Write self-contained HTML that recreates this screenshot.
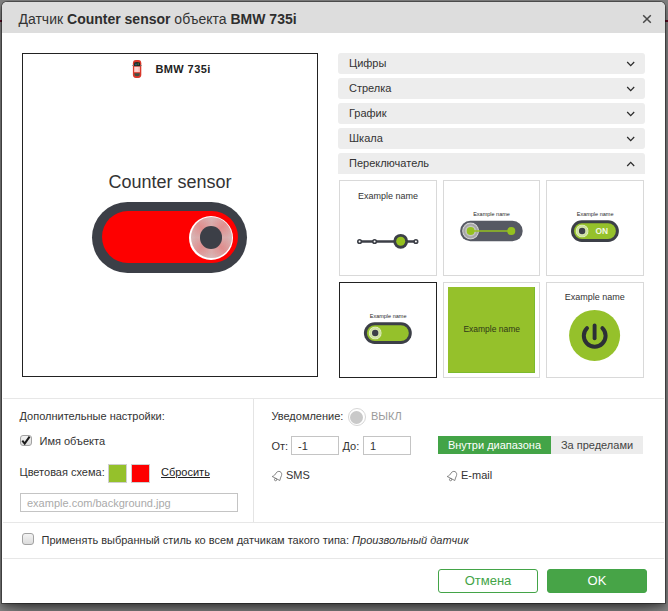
<!DOCTYPE html>
<html lang="ru">
<head>
<meta charset="utf-8">
<title>Датчик Counter sensor</title>
<style>
*{box-sizing:border-box;margin:0;padding:0}
html,body{width:668px;height:611px;overflow:hidden}
body{background:#828282;font-family:"Liberation Sans",Arial,sans-serif;font-size:12px;color:#333;position:relative}
.abs{position:absolute}
#dlg{position:absolute;left:2px;top:2px;width:663px;height:601px;background:#fff;border-radius:5px 5px 0 0;box-shadow:0 0 0 1px rgba(0,0,0,.35),0 3px 9px rgba(0,0,0,.5),0 16px 16px -10px rgba(0,0,0,.3)}
#hdr{position:absolute;left:0;top:0;width:663px;height:31px;background:#dddddd;border-radius:5px 5px 0 0}
#ttl{position:absolute;left:16.5px;top:8px;font-size:14px;line-height:18px;color:#333;white-space:nowrap}
#ttl b{color:#2e2e2e}
.mark{position:absolute;background:#5c0a22;height:2px;top:20px}
/* coordinates below are page coords; container offset by -2 */
#pg{position:absolute;left:-2px;top:-2px;width:668px;height:611px}
#prev{left:22px;top:53px;width:296px;height:324px;border:1px solid #222;background:#fff}
.acc{left:338px;width:307px;height:21px;background:#ededed;border-radius:3px;line-height:21px;padding-left:11px;color:#333;font-size:11px}
.acc svg{position:absolute;right:10px;top:8px}
.th{width:98px;height:96px;border:1px solid #d9d9d9;background:#fff}
.th.sel{border-color:#222}
.hr{background:#e7e7e7;height:1px;left:3px;width:661px}
.t{white-space:nowrap;line-height:14px;font-size:11px;color:#333}
.inp{border:1px solid #c4c4c4;background:#fff;height:19px;font-size:11px;line-height:19px;padding-left:6px;color:#333}
.cb{width:13px;height:13px;border:1px solid #a2a2a2;border-radius:3px;background:linear-gradient(#f3f3f3,#dcdcdc)}
.btn{height:24px;width:100px;border-radius:3px;text-align:center;font-size:13px;line-height:22px}
</style>
</head>
<body>
<div class="mark" style="left:0;width:2px"></div>
<div class="mark" style="left:665px;width:3px"></div>
<div id="dlg">
<div id="hdr"></div>
<div id="ttl">Датчик <b>Counter sensor</b> объекта <b>BMW 735i</b></div>
<div id="pg">
<svg class="abs" style="left:641.5px;top:13.6px" width="10" height="10" viewBox="0 0 10 10"><path d="M1.2 1.2 L8.8 8.8 M8.8 1.2 L1.2 8.8" stroke="#484848" stroke-width="1.5" fill="none"/></svg>

<div id="prev" class="abs"></div>
<!-- car -->
<svg class="abs" style="left:132px;top:59px" width="10" height="20" viewBox="0 0 10 20">
<rect x="0.9" y="0.9" width="8.4" height="18" rx="3" ry="3.4" fill="#d9382a"/>
<rect x="0" y="6" width="10" height=".9" fill="#8a8a8a" opacity=".8"/>
<path d="M1.9 7.2 L2.3 3.6 Q5 2.6 7.9 3.6 L8.3 7.2 Z" fill="#1d2a22"/>
<rect x="3.4" y="4.6" width="1.2" height="1.6" fill="#3a6fae"/><rect x="5.6" y="4.3" width="1.2" height="1.5" fill="#4f8a46"/>
<rect x="2.1" y="7.6" width="5.8" height="5.6" fill="#fbc3bd"/>
<rect x="3" y="8" width="3" height="4.6" fill="#ffd9d5" opacity=".7"/>
<path d="M2.4 14.2 L7.8 14.2 L7.4 16.8 Q5 17.6 2.8 16.8 Z" fill="#3f5146"/>
</svg>
<div class="abs t" style="left:155.4px;top:62px;font-weight:bold;font-size:11px;letter-spacing:.42px;color:#222">BMW 735i</div>
<div class="abs" style="left:22px;top:171px;transform:translateY(-.5px);width:296px;text-align:center;font-size:18px;line-height:22px;color:#333">Counter sensor</div>
<!-- big switch -->
<div class="abs" style="left:92.4px;top:202px;width:154.4px;height:70.6px;border-radius:36px;background:#3c3f47"></div>
<div class="abs" style="left:102px;top:211.4px;width:136px;height:52.1px;border-radius:26px;background:#fe0000"></div>
<div class="abs" style="left:189px;top:215.5px;width:44px;height:44px;border-radius:50%;background:#fff"></div>
<div class="abs" style="left:190.5px;top:217px;width:41px;height:41px;border-radius:50%;background:radial-gradient(circle,rgba(225,120,120,.4) 52%,rgba(214,196,196,.0) 100%),repeating-conic-gradient(from 0deg,#d4cece 0deg,#d8b6b6 22deg,#de9c9c 45deg,#d8b6b6 68deg,#d4cece 90deg)"></div>
<div class="abs" style="left:199.8px;top:226.3px;width:22.4px;height:22.4px;border-radius:50%;background:#3c3f47"></div>

<!-- accordion -->
<div class="abs acc" style="top:53px">Цифры<svg width="9" height="6" viewBox="0 0 9 6"><path d="M1.2 1 L4.7 4.6 L8.2 1" stroke="#2a2a2a" stroke-width="1.25" fill="none"/></svg></div>
<div class="abs acc" style="top:78px">Стрелка<svg width="9" height="6" viewBox="0 0 9 6"><path d="M1.2 1 L4.7 4.6 L8.2 1" stroke="#2a2a2a" stroke-width="1.25" fill="none"/></svg></div>
<div class="abs acc" style="top:103px">График<svg width="9" height="6" viewBox="0 0 9 6"><path d="M1.2 1 L4.7 4.6 L8.2 1" stroke="#2a2a2a" stroke-width="1.25" fill="none"/></svg></div>
<div class="abs acc" style="top:128px">Шкала<svg width="9" height="6" viewBox="0 0 9 6"><path d="M1.2 1 L4.7 4.6 L8.2 1" stroke="#2a2a2a" stroke-width="1.25" fill="none"/></svg></div>
<div class="abs acc" style="top:153px;border-radius:3px 3px 0 0">Переключатель<svg width="9" height="6" viewBox="0 0 9 6"><path d="M1.2 5 L4.7 1.4 L8.2 5" stroke="#2a2a2a" stroke-width="1.25" fill="none"/></svg></div>

<!-- thumbs -->
<div class="abs th" style="left:339px;top:180px"></div>
<div class="abs th" style="left:443px;top:180px;width:97px"></div>
<div class="abs th" style="left:546px;top:180px"></div>
<div class="abs th sel" style="left:339px;top:282px"></div>
<div class="abs th" style="left:443px;top:282px;width:97px"></div>
<div class="abs th" style="left:546px;top:282px"></div>

<svg class="abs" style="left:339px;top:180px" width="306" height="198" viewBox="339 180 306 198" font-family="Liberation Sans, Arial, sans-serif">
<defs>
<radialGradient id="kg" cx="50%" cy="50%" r="50%"><stop offset="0" stop-color="#dadada"/><stop offset=".5" stop-color="#cdcdcd"/><stop offset=".74" stop-color="#a2a2a2"/><stop offset=".86" stop-color="#b4b4b4"/><stop offset=".95" stop-color="#e0e0e0"/><stop offset="1" stop-color="#b9babd"/></radialGradient>
<radialGradient id="kw" cx="50%" cy="50%" r="50%"><stop offset="0" stop-color="#fff" stop-opacity=".7"/><stop offset=".5" stop-color="#fff" stop-opacity=".68"/><stop offset=".78" stop-color="#fff" stop-opacity=".5"/><stop offset=".9" stop-color="#fff" stop-opacity=".72"/><stop offset="1" stop-color="#fff" stop-opacity=".3"/></radialGradient>
</defs>
<!-- thumb 1 -->
<text x="388" y="198.6" font-size="9" text-anchor="middle" fill="#333">Example name</text>
<line x1="359.6" y1="241.5" x2="415.9" y2="241.5" stroke="#3c3f47" stroke-width="2.6"/>
<circle cx="359.6" cy="241.5" r="1.8" fill="#fff" stroke="#3c3f47" stroke-width="1.6"/>
<circle cx="374.6" cy="241.5" r="1.8" fill="#fff" stroke="#3c3f47" stroke-width="1.6"/>
<circle cx="415.9" cy="241.5" r="1.8" fill="#fff" stroke="#3c3f47" stroke-width="1.6"/>
<circle cx="400.7" cy="241.3" r="7.4" fill="#3c3f47"/>
<circle cx="400.7" cy="241.3" r="4.5" fill="#95c11f"/>
<!-- thumb 2 -->
<text x="491.5" y="215.8" font-size="5.5" text-anchor="middle" fill="#2a2a2a">Example name</text>
<rect x="460.1" y="220.8" width="62.6" height="20.4" rx="10.2" fill="#565963"/>
<circle cx="470.6" cy="231" r="8.4" fill="url(#kg)"/>
<line x1="470.6" y1="231" x2="511.3" y2="231" stroke="#95c11f" stroke-width="1.5"/>
<circle cx="470.6" cy="231" r="4" fill="#95c11f"/>
<circle cx="511.3" cy="231" r="4" fill="#95c11f"/>
<!-- thumb 3 -->
<text x="595.1" y="215.8" font-size="5.5" text-anchor="middle" fill="#2a2a2a">Example name</text>
<rect x="571" y="220.3" width="47.9" height="21.6" rx="10.8" fill="#3c3f47"/>
<rect x="574" y="223.2" width="41.9" height="15.8" rx="7.9" fill="#95c12b"/>
<circle cx="582.1" cy="231" r="6.6" fill="url(#kw)"/>
<circle cx="582.1" cy="231" r="3.2" fill="#3c3f47"/>
<text x="601.7" y="234" font-size="9.5" font-weight="bold" text-anchor="middle" fill="#f2f6e4" textLength="12.6" lengthAdjust="spacingAndGlyphs">ON</text>
<!-- thumb 4 -->
<text x="388.1" y="317.8" font-size="5.5" text-anchor="middle" fill="#2a2a2a">Example name</text>
<rect x="363.9" y="322.3" width="47.9" height="21.6" rx="10.8" fill="#3c3f47"/>
<rect x="366.9" y="325.2" width="41.9" height="15.8" rx="7.9" fill="#95c12b"/>
<circle cx="375.2" cy="333" r="6.6" fill="url(#kw)"/>
<circle cx="375.2" cy="333" r="3.2" fill="#3c3f47"/>
<!-- thumb 5 -->
<rect x="448" y="287" width="87" height="86" fill="#7cba2c"/><rect x="448" y="287" width="86" height="85" fill="#95c12b"/>
<text x="491.7" y="331.8" font-size="9.4" text-anchor="middle" fill="#2f3818" textLength="56.6" lengthAdjust="spacingAndGlyphs">Example name</text>
<!-- thumb 6 -->
<text x="594.8" y="299.7" font-size="9" text-anchor="middle" fill="#333">Example name</text>
<circle cx="594.6" cy="335.4" r="25.5" fill="#95c12b"/>
<path d="M587.0 328.1 A10.9 10.9 0 1 0 602.4 328.1" fill="none" stroke="#2c2f36" stroke-width="4" stroke-linecap="round"/>
<line x1="594.6" y1="325.4" x2="594.6" y2="338.2" stroke="#2c2f36" stroke-width="3.9" stroke-linecap="round"/>
</svg>
<!-- separators -->
<div class="abs hr" style="top:398px"></div>
<div class="abs" style="left:253px;top:399px;width:1px;height:123px;background:#e4e4e4"></div>
<div class="abs hr" style="top:522px"></div>
<div class="abs hr" style="top:558px"></div>

<!-- left settings -->
<div class="abs t" style="left:19.5px;top:409px">Дополнительные настройки:</div>
<div class="abs cb" style="left:20.2px;top:434.8px;width:11.6px;height:11.6px"></div>
<svg class="abs" style="left:20px;top:434px" width="12" height="13" viewBox="20 434 12 13"><path d="M22.3 440.6 L24.7 443.6 L29.6 436.6" stroke="#1a1a1a" stroke-width="2" fill="none"/></svg>
<div class="abs t" style="left:39.5px;top:434px">Имя объекта</div>
<div class="abs t" style="left:19.5px;top:465px">Цветовая схема:</div>
<div class="abs" style="left:108px;top:464px;width:19px;height:19px;background:#95c12b;border:1px solid #cfcfcf"></div>
<div class="abs" style="left:131px;top:464px;width:19px;height:19px;background:#fe0000;border:1px solid #cfcfcf"></div>
<div class="abs t" style="left:161px;top:465px;text-decoration:underline;color:#222">Сбросить</div>
<div class="abs inp" style="left:20px;top:493px;width:218px;color:#aaa">example.com/background.jpg</div>

<!-- right settings -->
<div class="abs t" style="left:271.4px;top:409px">Уведомление:</div>
<div class="abs" style="left:347.5px;top:408px;width:18px;height:18px;border-radius:50%;border:1px solid #d6d6d6;background:#fff"></div>
<div class="abs" style="left:350px;top:410.5px;width:13px;height:13px;border-radius:50%;background:#c9c9c9"></div>
<div class="abs t" style="left:371px;top:409px;color:#9a9a9a">ВЫКЛ</div>
<div class="abs t" style="left:271.4px;top:439px">От:</div>
<div class="abs inp" style="left:291px;top:436px;width:48px">-1</div>
<div class="abs t" style="left:342.5px;top:439px">До:</div>
<div class="abs inp" style="left:363px;top:436px;width:48px">1</div>
<div class="abs t" style="left:438px;top:436px;width:113px;height:18px;line-height:18px;background:#43a447;color:#fff;text-align:center">Внутри диапазона</div>
<div class="abs t" style="left:551px;top:436px;width:92px;height:18px;line-height:18px;background:#ececec;color:#444;text-align:center">За пределами</div>
<svg class="abs" style="left:270px;top:469px" width="13" height="14" viewBox="270 469 13 14"><path d="M272.2 476.5 C274.4 475.8 275.3 474.4 276.1 473 C277 471.6 278.6 471.0 280 471.6 C281.6 472.3 282 474 281.5 475.6 C280.9 477.4 280 478.6 279.8 480.5 Z" fill="none" stroke="#6a6a6a" stroke-width=".8" stroke-linejoin="round"/><circle cx="275.6" cy="479.6" r="1.15" fill="none" stroke="#6a6a6a" stroke-width=".8"/></svg>
<div class="abs t" style="left:286px;top:468px">SMS</div>
<svg class="abs" style="left:445px;top:469px" width="13" height="14" viewBox="270 469 13 14"><path d="M272.2 476.5 C274.4 475.8 275.3 474.4 276.1 473 C277 471.6 278.6 471.0 280 471.6 C281.6 472.3 282 474 281.5 475.6 C280.9 477.4 280 478.6 279.8 480.5 Z" fill="none" stroke="#6a6a6a" stroke-width=".8" stroke-linejoin="round"/><circle cx="275.6" cy="479.6" r="1.15" fill="none" stroke="#6a6a6a" stroke-width=".8"/></svg>
<div class="abs t" style="left:461px;top:468px">E-mail</div>

<!-- apply row -->
<div class="abs cb" style="left:22px;top:533px;width:12px;height:12px"></div>
<div class="abs t" style="left:41.5px;top:533px">Применять выбранный стиль ко всем датчикам такого типа: <i>Произвольный датчик</i></div>

<!-- buttons -->
<div class="abs btn" style="left:438px;top:569px;border:1px solid #43a447;color:#43a447;background:#fff">Отмена</div>
<div class="abs btn" style="left:547px;top:569px;border:1px solid #43a447;color:#fff;background:#47a447">OK</div>
</div>
</div>
</body>
</html>
